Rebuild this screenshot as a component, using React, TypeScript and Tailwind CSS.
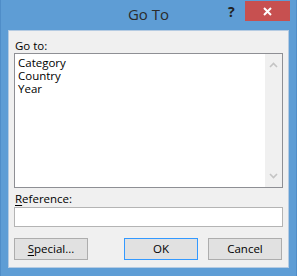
const ui = { fontFamily: '"Open Sans", "Noto Sans", sans-serif' }

function Chevron({ up }: { up?: boolean }) {
  return (
    <svg width="9" height="6" viewBox="0 0 9 6" className="block">
      <path
        d={up ? 'M1 5 L4.5 1.5 L8 5' : 'M1 1 L4.5 4.5 L8 1'}
        fill="none"
        stroke="#c4c4c4"
        strokeWidth="1.6"
      />
    </svg>
  )
}

const items = ['Category', 'Country', 'Year']

export default function App() {
  return (
    <div
      className="w-[297px] h-[276px] bg-[#5e9dd5] border-x border-[#4f8dc8] flex flex-col"
      style={ui}
    >
      <div className="relative h-[30px] shrink-0">
        <div className="h-full flex items-center justify-center text-[15px] leading-none text-[#2b2b2b] pb-[1px]">
          Go To
        </div>
        <span className="absolute left-[227px] top-[4px] text-[14px] font-bold text-[#222] leading-[16px]">?</span>
        <button className="absolute left-[244px] top-[1px] w-[45px] h-[20px] bg-[#c75050] flex items-center justify-center">
          <svg width="9" height="9" viewBox="0 0 9 9">
            <path d="M1 1 L8 8 M8 1 L1 8" stroke="#fff" strokeWidth="2" />
          </svg>
        </button>
      </div>

      <div className="mx-[7px] h-[238px] bg-[#f0f0f0] border border-[#b5cbe2] px-[5px] pt-[7px] text-[11.5px] text-black">
        <div className="h-[15px] leading-[15px] pl-[1px]">Go to:</div>
        <div className="h-[135px] border border-[#8e8f94] bg-white flex">
          <div className="flex-1 pt-[2px] pl-[3px]">
            {items.map((it) => (
              <div key={it} className="h-[13px] leading-[13px]">
                {it}
              </div>
            ))}
          </div>
          <div className="w-[17px] bg-[#f0f0f0] flex flex-col items-center justify-between py-[8px]">
            <Chevron up />
            <Chevron />
          </div>
        </div>
        <div className="mt-[3px] h-[15px] leading-[15px] pl-[1px]">
          <span className="underline underline-offset-2">R</span>eference:
        </div>
        <div className="mt-[1px] h-[20px] border border-[#b4b4b4] bg-white" />
        <div className="mt-[11px] flex">
          <button className="w-[74px] h-[22px] border border-[#adadad] bg-[#e1e1e1] text-[11.5px] leading-none">
            <span className="underline underline-offset-2">S</span>pecial...
          </button>
          <button className="ml-[36px] w-[74px] h-[22px] border border-[#3399ff] bg-[#e1e1e1] text-[11.5px] leading-none">
            OK
          </button>
          <button className="ml-[10px] w-[74px] h-[22px] border border-[#adadad] bg-[#e1e1e1] text-[11.5px] leading-none">
            Cancel
          </button>
        </div>
      </div>
    </div>
  )
}
